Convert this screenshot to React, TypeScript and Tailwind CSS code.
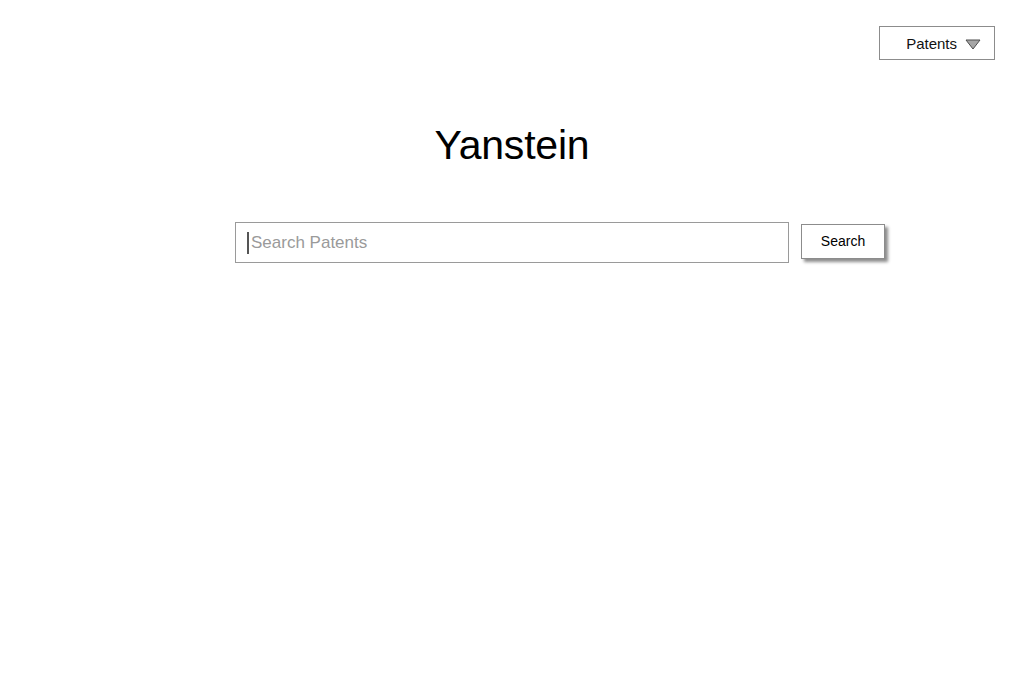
import { useState } from 'react';

export default function App() {
  const [query, setQuery] = useState('');

  return (
    <div className="relative h-[700px] w-[1024px] bg-white font-['Liberation_Sans',Arial,sans-serif] text-black">
      <div className="flex justify-end pr-[29px] pt-[26px]">
        <button className="flex h-[34px] w-[116px] items-center justify-end gap-[8px] border border-[#8c8c8c] bg-white pr-[13px] pt-[2px] text-[15px] text-[#111]">
          <span>Patents</span>
          <svg width="16" height="11" viewBox="0 0 16 11">
            <path d="M1 1 L15 1 L8 10 Z" fill="#a6a6a6" stroke="#4d4d4d" strokeWidth="1" strokeLinejoin="round" />
          </svg>
        </button>
      </div>

      <h1 className="mt-[60px] text-center text-[41px] leading-[50px] tracking-[-0.2px]">Yanstein</h1>

      <div className="mt-[52px] flex items-start pl-[235px]">
        <div className="relative flex h-[41px] w-[554px] items-center border border-[#9a9a9a] bg-white pl-[11px]">
          <span className="h-[22px] w-[2px] bg-[#555]" />
          <input
            value={query}
            onChange={e => setQuery(e.target.value)}
            placeholder="Search Patents"
            className="ml-[2px] flex-1 bg-transparent text-[17px] text-[#333] outline-none placeholder:text-[#9a9a9a]"
          />
        </div>
        <button className="ml-[12px] mt-[2px] h-[35px] w-[84px] border border-[#8c8c8c] bg-white text-[14px] text-black shadow-[3px_3px_3px_rgba(0,0,0,0.45)]">
          Search
        </button>
      </div>
    </div>
  );
}
